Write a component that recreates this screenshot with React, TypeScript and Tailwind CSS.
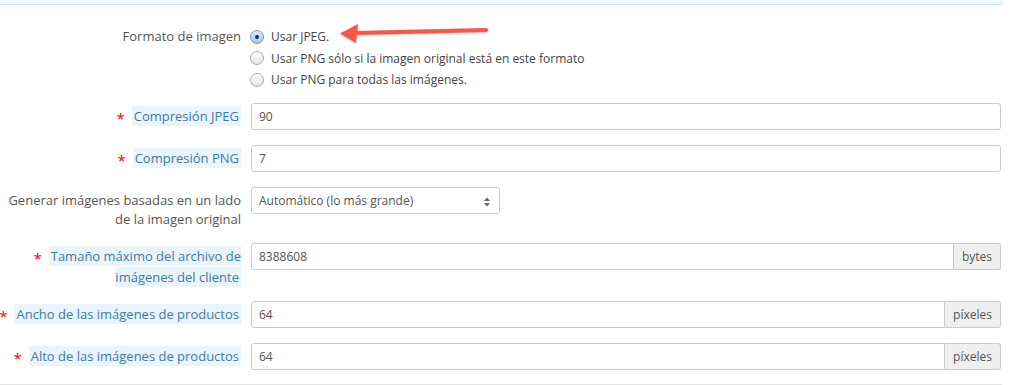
import React from 'react'

const labelCol = 'flex w-[241px] shrink-0 justify-end pt-[4px]'
const tipClass = 'bg-[#e9f4fb] px-[2px] py-px text-[#3e7ba6]'
const inputClass =
  'flex h-[27px] items-center rounded-[3px] border border-[#cbcbcb] bg-white pl-[7px] text-[12px] text-[#555]'

function Star() {
  return <span className="mr-[7px] align-[-3px] text-[15px] text-[#f00]">*</span>
}

function Radio({ checked, label }: { checked?: boolean; label: string }) {
  return (
    <div className="flex h-[21.5px] items-center">
      <span
        className={
          checked
            ? 'ml-[-1px] flex h-[14px] w-[14px] items-center justify-center rounded-full border border-[#6f97c4] bg-gradient-to-b from-[#dcebfa] to-[#a8cbee]'
            : 'ml-[-1px] h-[14px] w-[14px] rounded-full border border-[#a9a9a9] bg-gradient-to-b from-white to-[#e4e4e4]'
        }
      >
        {checked && <span className="h-[4px] w-[4px] rounded-full bg-[#1d2c44]" />}
      </span>
      <span className="ml-[7px] text-[12px] text-[#444]">{label}</span>
    </div>
  )
}

function Addon({ value, unit }: { value: string; unit: string }) {
  return (
    <div className="flex h-[27px] w-[750px]">
      <div className={inputClass + ' flex-1 rounded-r-none'}>{value}</div>
      <div className="flex items-center rounded-r-[3px] border border-l-0 border-[#cbcbcb] bg-[#efefef] px-[8px] text-[12px] text-[#555]">
        {unit}
      </div>
    </div>
  )
}

export default function App() {
  return (
    <div className="relative h-[385px] w-[1022px] overflow-hidden bg-white font-['Open_Sans',sans-serif] text-[13px] leading-[19px]">
      <div className="w-[1002px]">
        <div className="h-[5px] rounded-br-[3px] border-r border-b border-[#c0e5f0] bg-[#f5fbfd]" />

        <div className="mt-[21px] flex">
          <div className="flex w-[241px] shrink-0 justify-end pt-[1px]">
            <span className="whitespace-nowrap text-[#555]">Formato de imagen</span>
          </div>
          <div className="ml-[10px]">
            <Radio checked label="Usar JPEG." />
            <Radio label="Usar PNG sólo si la imagen original está en este formato" />
            <Radio label="Usar PNG para todas las imágenes." />
          </div>
        </div>

        <div className="mt-[12.5px] flex">
          <div className={labelCol}>
            <div className="whitespace-nowrap text-right">
              <Star />
              <span className={tipClass}>Compresión JPEG</span>
            </div>
          </div>
          <div className={inputClass + ' ml-[10px] w-[750px]'}>90</div>
        </div>

        <div className="mt-[15px] flex">
          <div className={labelCol}>
            <div className="whitespace-nowrap text-right">
              <Star />
              <span className={tipClass}>Compresión PNG</span>
            </div>
          </div>
          <div className={inputClass + ' ml-[10px] w-[750px]'}>7</div>
        </div>

        <div className="mt-[15px] flex">
          <div className={labelCol}>
            <div className="whitespace-nowrap text-right text-[#555]">
              Generar imágenes basadas en un lado
              <br />
              de la imagen original
            </div>
          </div>
          <div className={inputClass + ' ml-[10px] h-[26px] w-[249px] justify-between pr-[9px]'}>
            <span>Automático (lo más grande)</span>
            <svg width="6" height="10" viewBox="0 0 6 10" className="mt-[2px]">
              <path d="M0 4 L3 0.5 L6 4 Z" fill="#666" />
              <path d="M0 6 L3 9.5 L6 6 Z" fill="#666" />
            </svg>
          </div>
        </div>

        <div className="mt-[14px] flex">
          <div className={labelCol}>
            <div className="whitespace-nowrap text-right">
              <Star />
              <span className={tipClass}>
                Tamaño máximo del archivo de
                <br />
                imágenes del cliente
              </span>
            </div>
          </div>
          <div className="ml-[10px]">
            <Addon value="8388608" unit="bytes" />
          </div>
        </div>

        <div className="mt-[14px] flex">
          <div className={labelCol}>
            <div className="whitespace-nowrap text-right">
              <Star />
              <span className={tipClass}>Ancho de las imágenes de productos</span>
            </div>
          </div>
          <div className="ml-[10px]">
            <Addon value="64" unit="píxeles" />
          </div>
        </div>

        <div className="mt-[15px] flex">
          <div className={labelCol}>
            <div className="whitespace-nowrap text-right">
              <Star />
              <span className={tipClass}>Alto de las imágenes de productos</span>
            </div>
          </div>
          <div className="ml-[10px]">
            <Addon value="64" unit="píxeles" />
          </div>
        </div>

        <div className="mt-[14px] h-px bg-[#e5e5e5]" />
      </div>

      {/* red callout arrow pointing at the JPEG option */}
      <svg
        className="absolute left-[330px] top-[16px] drop-shadow-[0_1px_1px_rgba(0,0,0,0.25)]"
        width="170"
        height="34"
        viewBox="330 16 170 34"
      >
        <line x1="354" y1="33" x2="486" y2="30" stroke="#f25a50" strokeWidth="4" strokeLinecap="round" />
        <path d="M340 33.5 L358 24 L356 43 Z" fill="#f25a50" />
      </svg>
    </div>
  )
}
